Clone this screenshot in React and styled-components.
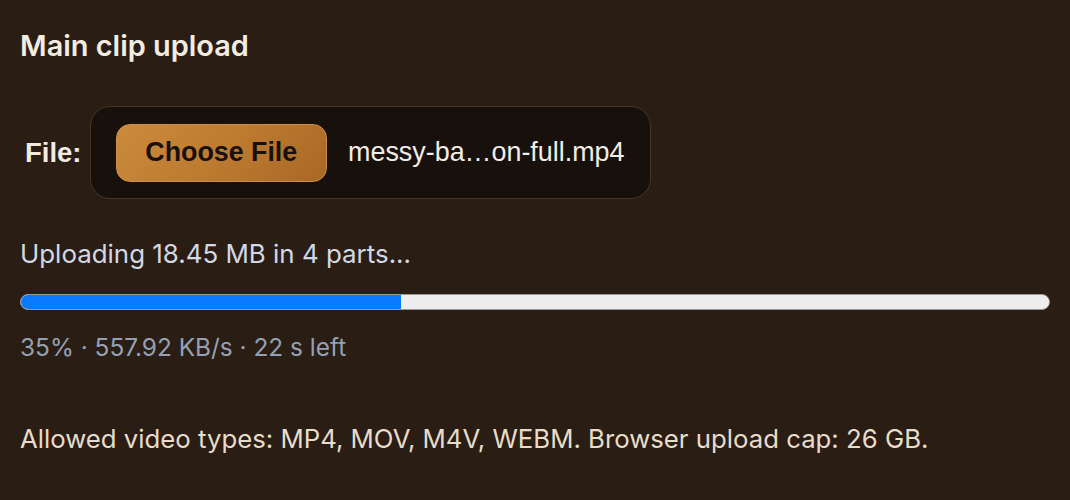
import styled, { createGlobalStyle } from 'styled-components'

const GlobalStyle = createGlobalStyle`
  html, body {
    margin: 0;
    background: #2a1d14;
  }
`

const upload = {
  fileName: 'messy-ba…on-full.mp4',
  sizeLabel: '18.45 MB',
  parts: 4,
  percent: 37,
  stats: '35% · 557.92 KB/s · 22 s left',
}

export default function App() {
  return (
    <>
      <GlobalStyle />
      <Panel>
        <Title>Main clip upload</Title>
        <FileRow>
          <FileLabel>File:</FileLabel>
          <Picker>
            <ChooseButton type="button">Choose File</ChooseButton>
            <FileName>{upload.fileName}</FileName>
          </Picker>
        </FileRow>
        <Status>
          Uploading {upload.sizeLabel} in {upload.parts} parts...
        </Status>
        <Track>
          <Fill style={{ width: `${upload.percent}%` }} />
        </Track>
        <Stats>{upload.stats}</Stats>
        <Hint>Allowed video types: MP4, MOV, M4V, WEBM. Browser upload cap: 26 GB.</Hint>
      </Panel>
    </>
  )
}

const Panel = styled.div`
  display: flex;
  flex-direction: column;
  width: 1070px;
  height: 500px;
  box-sizing: border-box;
  padding: 28px 20px 0 20px;
  font-family: Inter, 'Liberation Sans', sans-serif;
`

const Title = styled.h2`
  margin: 0;
  font-size: 28.9px;
  font-weight: 600;
  line-height: 36px;
  color: #f3ece1;
`

const FileRow = styled.div`
  display: flex;
  align-items: center;
  gap: 8px;
  margin-top: 42px;
  padding-left: 5px;
`

const FileLabel = styled.span`
  font-family: 'Liberation Sans', Arial, sans-serif;
  font-weight: 700;
  font-size: 27.5px;
  color: #f1ebe2;
`

const Picker = styled.div`
  display: flex;
  align-items: center;
  gap: 21px;
  width: 561px;
  height: 93px;
  box-sizing: border-box;
  padding: 0 25px;
  background: #17100b;
  border: 1.5px solid #463623;
  border-radius: 20px;
`

const ChooseButton = styled.button`
  width: 212px;
  height: 58px;
  border: 1px solid #d08e45;
  border-radius: 14px;
  background: linear-gradient(135deg, #cb8a3c 0%, #bd7b30 50%, #a86826 100%);
  font-family: 'Liberation Sans', Arial, sans-serif;
  font-weight: 700;
  font-size: 26.8px;
  color: #17100b;
  cursor: pointer;
`

const FileName = styled.span`
  font-family: 'Liberation Sans', Arial, sans-serif;
  font-size: 26.9px;
  color: #f2ede6;
  white-space: nowrap;
`

const Status = styled.p`
  margin: 38px 0 0 0;
  font-size: 25.9px;
  line-height: 34px;
  color: #d2d9e4;
`

const Track = styled.div`
  margin-top: 23px;
  height: 16px;
  box-sizing: border-box;
  background: #ededed;
  border: 1px solid #9b9a99;
  border-radius: 8px;
  overflow: hidden;
`

const Fill = styled.div`
  height: 100%;
  background: #0a7bff;
`

const Stats = styled.p`
  margin: 20px 0 0 0;
  font-size: 24.4px;
  line-height: 34px;
  color: #94a1b5;
`

const Hint = styled.p`
  margin: 58px 0 0 0;
  font-size: 25.75px;
  line-height: 34px;
  color: #e8dcca;
`
